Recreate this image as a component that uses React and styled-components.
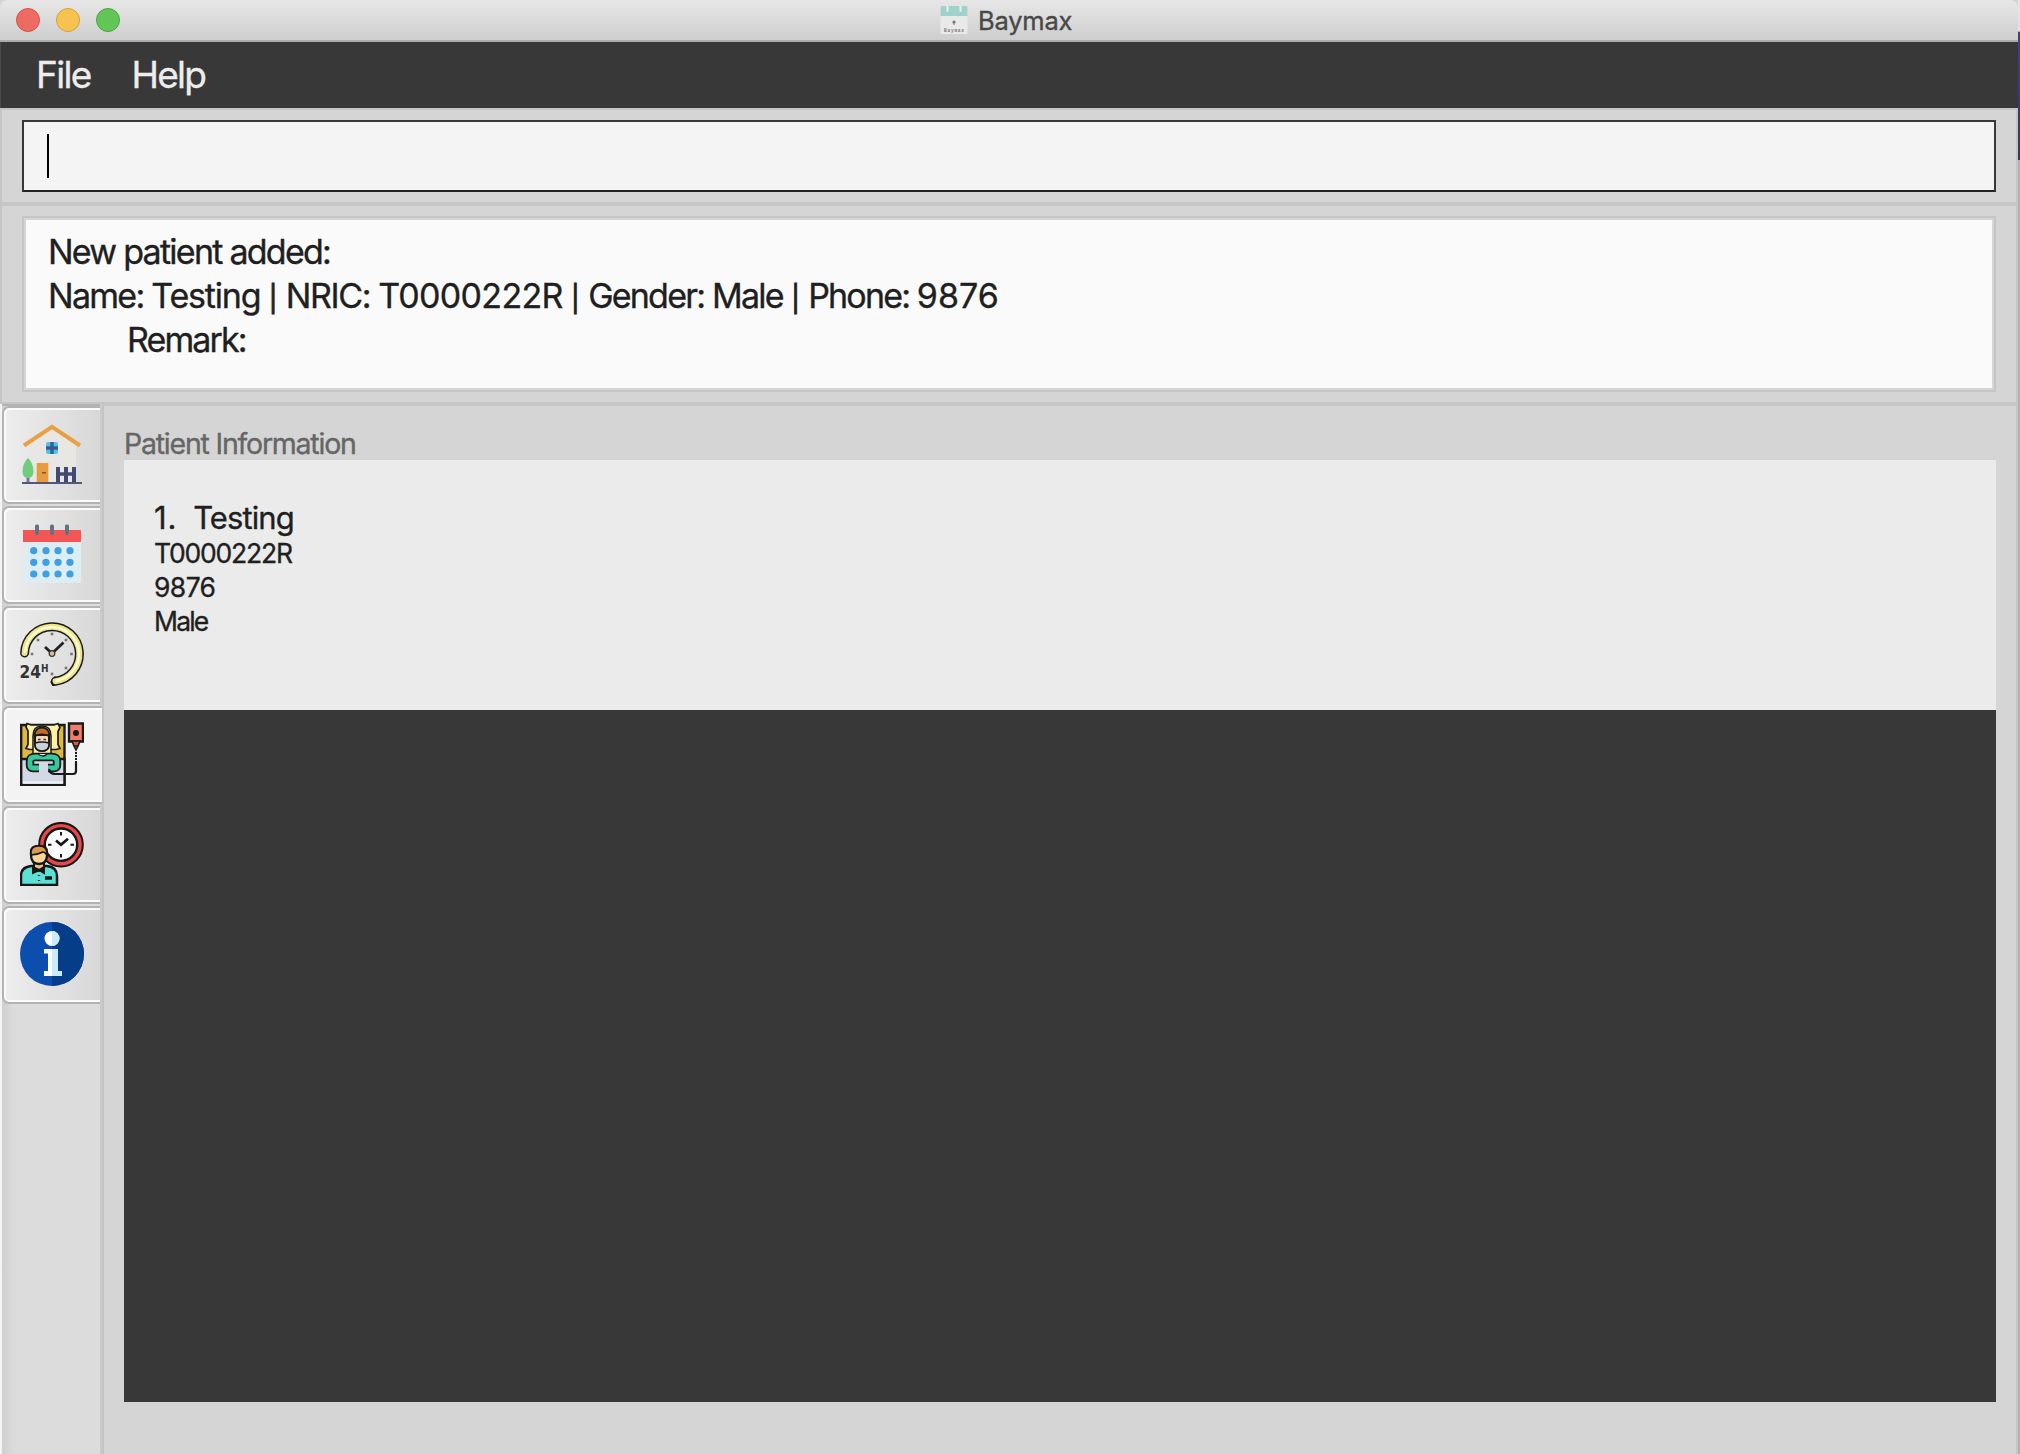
import React from "react";
import styled, { createGlobalStyle } from "styled-components";

const GlobalStyle = createGlobalStyle`
  * { box-sizing: border-box; }
  body { margin: 0; background: #d5d5d5; font-family: Inter, "Liberation Sans", sans-serif; }
`;

const Window = styled.div`
  width: 2020px;
  height: 1454px;
  display: flex;
  flex-direction: row;
  overflow: hidden;
  background: #d5d5d5;
`;

const Frame = styled.div`
  width: 2018px;
  display: flex;
  flex-direction: column;
`;

const Desktop = styled.div`
  width: 2px;
  height: 1454px;
  background: linear-gradient(to bottom, #e4e4e4 0 31px, #a9a9a9 31px 32px, #33438f 32px, #2c3978 160px, #b2b2b2 160px);
`;

const TitleBar = styled.header`
  height: 42px;
  display: flex;
  align-items: flex-start;
  border-bottom: 2px solid #adadad;
  border-radius: 8px 8px 0 0;
  background: linear-gradient(#e7e7e7, #cecece);
`;

const Lights = styled.div`
  display: flex;
  gap: 16px;
  padding: 8px 0 0 16px;
  width: 940px;
`;

const Light = styled.span`
  width: 24px;
  height: 24px;
  border-radius: 50%;
  background: ${(p) => p.$fill};
  border: 1px solid ${(p) => p.$edge};
`;

const Label = styled.div`
  font-size: ${(p) => p.$size}px;
  line-height: ${(p) => p.$line}px;
  letter-spacing: ${(p) => p.$track || 0}px;
  color: ${(p) => p.$color || "#1f1f1f"};
  -webkit-text-stroke: 0.35px currentColor;
  white-space: pre;
`;

const Run = styled.span`
  letter-spacing: ${(p) => p.$track}px;
`;

const Bar = styled.span`
  display: inline-block;
  width: 25.5px;
  font-size: 26px;
  line-height: 30px;
  text-align: center;
  -webkit-text-stroke-width: 0.9px;
`;

const AppIcon = styled.svg`
  width: 28px;
  height: 29px;
  margin-top: 5px;
`;

const WindowTitle = styled(Label)`
  margin: 5px 0 0 10px;
`;

const MenuBar = styled.nav`
  height: 66px;
  display: flex;
  gap: 41px;
  padding: 10px 0 0 35px;
  background: #383838;
  border-left: 1px solid #4a4a4a;
`;

const Pane = styled.section`
  height: ${(p) => p.$height}px;
  padding: 10px 20px;
  border: 2px solid #c5c5c5;
  display: flex;
`;

const CommandField = styled.div`
  flex: 1;
  height: 72px;
  border: 2px solid #383838;
  border-bottom-color: #222;
  background: #f4f4f4;
  padding: 12px 23px;
`;

const Caret = styled.div`
  width: 2px;
  height: 44px;
  background: #000;
`;

const ResultBox = styled.div`
  flex: 1;
  height: 176px;
  border: 2px solid #c5c5c5;
  outline: 2px solid #d5d5d5;
  outline-offset: -4px;
  background: #fafafa;
  padding: 12px 24px;
`;

const Indented = styled.div`
  padding-left: 79px;
`;

const Main = styled.main`
  flex: 1;
  display: flex;
`;

const Sidebar = styled.aside`
  width: 102px;
  padding-top: 2px;
  border-left: 2px solid #f4f4f4;
  background:
    linear-gradient(to right, transparent 98px, #cbcbcb 98px),
    linear-gradient(#b3b3b3 0 2px, transparent 2px),
    linear-gradient(to right, #cfcfcf, #dcdcdc 12px);
  display: flex;
  flex-direction: column;
  gap: 2px;
`;

const Tab = styled.div`
  width: ${(p) => (p.$active ? 100 : 98)}px;
  height: 98px;
  border: 2px solid #b3b3b3;
  border-right: 0;
  border-radius: 7px 0 0 7px;
  background: ${(p) => (p.$active ? "#f3f3f3" : "linear-gradient(to right, #ededed, #d8d8d8)")};
  box-shadow: inset 2px 2px 0 #fbfbfb, inset 0 -2px 0 #fbfbfb;
  padding: 14px 0 0 16px;

  svg { display: block; width: 64px; height: 64px; }
`;

const Content = styled.section`
  flex: 1;
  border-left: 2px solid #c4c4c4;
  border-top: 2px solid #c5c5c5;
  border-right: 2px solid #c5c5c5;
  padding: 21px 20px 0;
`;

const SectionTitle = styled(Label)`
  height: 33px;
`;

const PatientList = styled.div`
  height: 942px;
  background: #383838;
`;

const PatientCell = styled.article`
  height: 250px;
  background: #ebebeb;
  padding: 38px 30px;
`;

const NameRow = styled.div`
  display: flex;
  height: 38px;
  gap: 16px;
`;

const HomeIcon = () => (
  <svg viewBox="0 0 64 64">
    <path d="M8 22 32 6l24 16v38H8z" fill="#e8e7e3" />
    <path d="M4 23.5 32 4.8l28 18.7" fill="none" stroke="#e9a045" strokeWidth="4" />
    <rect x="26" y="20" width="12" height="12" rx="2" fill="#48c4f1" />
    <path d="M32 20v12M26 26h12" stroke="#3b5d8d" strokeWidth="3.400" />
    <path d="M8 50v11" stroke="#77779a" strokeWidth="3" />
    <path d="M8 36c3 3 5.500 8 5.500 13S11 56 8 56s-5.500-2-5.500-7S5 39 8 36z" fill="#72cc7d" />
    <rect x="16.700" y="41" width="11.600" height="20" fill="#e99b40" />
    <path d="M22 50.800h4" stroke="#7a5a35" strokeWidth="1.500" />
    <path d="M38 45v16M46 45v16M54 45v16" stroke="#434872" strokeWidth="4" />
    <path d="M38 52h16" stroke="#434872" strokeWidth="3.500" />
    <path d="M2 61h60" stroke="#53577b" strokeWidth="2" />
  </svg>
);

const CalendarIcon = () => (
  <svg viewBox="0 0 64 64">
    <rect x="3.500" y="20" width="57.500" height="41" fill="#dcedf4" />
    <rect x="3" y="8" width="58" height="12" fill="#f45656" />
    {[17, 32, 47].map((x) => (
      <rect key={x} x={x - 2} y="2.500" width="4" height="10.500" rx="1.500" fill="#65727d" />
    ))}
    {[28.7, 40.3, 52].map((y) =>
      [13.7, 26, 38, 50].map((x) => <circle key={`${x}-${y}`} cx={x} cy={y} r="3.600" fill="#3f9fe3" />)
    )}
  </svg>
);

const ClockIcon = () => (
  <svg viewBox="0 0 64 64" fill="none">
    <path d="M36 55l-4 5 2 4" stroke="#1c1c1c" strokeWidth="3" />
    <path d="M4.600 31A27.400 27.400 0 1 1 35.500 59.200" stroke="#1c1c1c" strokeWidth="9" strokeLinecap="round" />
    <path d="M4.600 31A27.400 27.400 0 1 1 35.500 59.200" stroke="#ece68c" strokeWidth="6" strokeLinecap="round" />
    <path d="M5 31A27 27 0 1 1 35.500 58.800" stroke="#fdfbd6" strokeWidth="2.200" />
    {[[32, 12], [18, 18], [12, 32], [46, 18], [51.5, 32], [46, 46], [32, 52]].map(([x, y]) => (
      <rect key={`${x}-${y}`} x={x - 1.3} y={y - 1.3} width="2.600" height="2.600" fill="#777" />
    ))}
    <path d="M25 25l6 5.500M33 30.500L43.500 20.500" stroke="#222" strokeWidth="2.800" />
    <circle cx="32" cy="31.500" r="2.800" fill="#e3bd98" stroke="#333" strokeWidth="1.200" />
    <text x="-0.500" y="56" fontFamily="DejaVu Sans, sans-serif" fontWeight="700" fontSize="18" textLength="21.500" lengthAdjust="spacingAndGlyphs" fill="#333">24</text>
    <text x="21" y="50" fontFamily="DejaVu Sans, sans-serif" fontWeight="700" fontSize="10" textLength="7.500" lengthAdjust="spacingAndGlyphs" fill="#333">H</text>
  </svg>
);

const PatientIcon = () => (
  <svg viewBox="0 0 64 64" stroke="#1a1a1a" strokeWidth="2" fill="none">
    <path d="M1.200 3h43.300v60H1.200z" fill="#dfb840" strokeWidth="2.400" />
    <path d="M1.200 37h43.300v26H1.200z" fill="#d3d9e4" strokeWidth="2.400" />
    <path d="M3 60.500h40" stroke="#eef1f6" strokeWidth="2.400" />
    <path d="M7 1.500l4 1.500h23l4-1.500 2 4-2 4v13l2 4-4 1H10l-4-1 2-4V9L6 5z" fill="#fff0a8" strokeWidth="1.700" />
    <path d="M13 33V14c0-6 3-10 9-10s9 4 9 10v19" fill="#fff0a8" strokeWidth="1.500" />
    <path d="M15 13h14v9c0 4-3 7-7 7s-7-3-7-7z" fill="#f6d4b8" strokeWidth="2" />
    <path d="M14.500 14c0-5 3-8.500 7.500-8.500s7.500 3.500 7.500 8.500c-4-2-11-2-15 0z" fill="#c5662d" strokeWidth="2" />
    <path d="M15 21q7-2 14 0v2c0 4-3 6-7 6s-7-2-7-6z" fill="#cad1dc" strokeWidth="1.700" />
    <path d="M18 17.500h2.500M23.500 17.500H26" stroke="#333" strokeWidth="1.700" />
    <path d="M19 35h-4q-5 0-5 4v4q0 3 3 3h6M25 35h7q5 0 5 4v4q0 3-3 3h-6M18 35h10" strokeWidth="8.500" strokeLinejoin="round" />
    <path d="M19 35h-4q-5 0-5 4v4q0 3 3 3h6M25 35h7q5 0 5 4v4q0 3-3 3h-6M18 35h10" stroke="#37c99e" strokeWidth="4.800" strokeLinejoin="round" />
    <path d="M18 32q5.500 4 9 0" fill="#e7edf1" strokeWidth="1.300" />
    <path d="M49 1.500h14v18H49z" fill="#f17c6b" strokeWidth="2.400" />
    <path d="M52 19h8l-2 5h-4zM54 24h4l-2 4z" fill="#d45749" strokeWidth="1.600" />
    <circle cx="56" cy="11" r="2" fill="#1a1a1a" />
    <path d="M56 30v10" strokeDasharray="2 1" />
    <path d="M56 40v9q0 3-3 3H35q-5 0-6-5" strokeWidth="2.200" />
  </svg>
);

const AppointmentIcon = () => (
  <svg viewBox="0 0 64 64" stroke="#161616" strokeWidth="2">
    <circle cx="41" cy="22.700" r="21.800" fill="#e5474a" />
    <circle cx="41" cy="22.700" r="16.200" fill="#fff" strokeWidth="2.400" />
    <path d="M41 10v3.500M41 32v3.500M28 22.700h3.500M50.500 22.700H54" />
    <path d="M36 18.500l5 4.200 7-6" fill="none" strokeWidth="2.800" />
    <path d="M1 63V54q0-9 10-10h16q10 1 10 10v9z" fill="#5ce0d6" strokeWidth="2.500" />
    <path d="M14 40h10v7l-5 2-5-2z" fill="#efbf82" />
    <path d="M11 30q0-6 8-6t8 6v3q0 9-8 9t-8-9z" fill="#fbd596" strokeWidth="2.300" />
    <path d="M11 33v-4q1-5 8-5 7 0 8 6v3q-2-3-4-3-6 3-12 3z" fill="#d99b46" strokeWidth="1.700" />
    <path d="M13 45v6l6-3 5 3v-6l-5 3z" fill="#161616" />
    <path d="M19 53v1M19 58v1" strokeWidth="2.300" />
    <path d="M25 56h7" strokeWidth="3.500" />
  </svg>
);

const InfoIcon = () => (
  <svg viewBox="0 0 64 64">
    <circle cx="32" cy="32" r="32" fill="#0b4eae" />
    <path d="M32 0a32 32 0 0 1 0 64z" fill="#063d88" />
    <circle cx="32" cy="16.500" r="7.500" fill="#fff" />
    <path d="M32 9a7.500 7.500 0 0 1 0 15z" fill="#c9ecff" />
    <path d="M24 27h14v22h4v5H24v-5h4V31.500h-4z" fill="#fff" />
    <path d="M32 27h6v22h4v5H32z" fill="#c9ecff" />
  </svg>
);

const CalendarAppIcon = () => (
  <AppIcon viewBox="0 0 28 29">
    <rect x="0.500" y="2" width="27" height="27" rx="1.500" fill="#e9e9e9" />
    <path d="M0.500 11V2.500Q.500 1 2 1h24q1.500 0 1.500 1.500V11z" fill="#9fd3ca" />
    <path d="M7.500 1v5M20.500 1v5" stroke="#eee" strokeWidth="2" strokeLinecap="round" />
    <circle cx="14" cy="17" r="1.600" fill="#777" />
    <path d="M14 18v2" stroke="#777" />
    <text x="4" y="26.500" fontSize="4.500" fontWeight="700" fontFamily="Liberation Mono, monospace" textLength="20" fill="#777">Baymax</text>
  </AppIcon>
);

const tabs = [HomeIcon, CalendarIcon, ClockIcon, PatientIcon, AppointmentIcon, InfoIcon];
const ACTIVE_TAB = 3;

const resultFields = [
  { name: "Name: ", value: "Testing", nameTrack: -1.72, valueTrack: -1.2 },
  { name: "NRIC: ", value: "T0000222R", nameTrack: -1.4, valueTrack: -0.7 },
  { name: "Gender: ", value: "Male", nameTrack: -1.77, valueTrack: -1.8 },
  { name: "Phone: ", value: "9876", nameTrack: -1.84, valueTrack: 0 },
];

export default function App() {
  return (
    <Window>
      <GlobalStyle />
      <Frame>
        <TitleBar>
          <Lights>
            <Light $fill="#ed6b60" $edge="#d55549" />
            <Light $fill="#f6c350" $edge="#d8a13c" />
            <Light $fill="#62c656" $edge="#4ba73f" />
          </Lights>
          <CalendarAppIcon />
          <WindowTitle $size={25.5} $line={32} $track={-0.2} $color="#484848">Baymax</WindowTitle>
        </TitleBar>
        <MenuBar>
          <Label $size={37} $line={46} $track={-1.7} $color="#ededed">File</Label>
          <Label $size={37} $line={46} $track={-1.8} $color="#ededed">Help</Label>
        </MenuBar>
        <Pane $height={96}>
          <CommandField><Caret /></CommandField>
        </Pane>
        <Pane $height={200}>
          <ResultBox>
            <Label $size={34} $line={44} $track={-1.75}>New patient added:</Label>
            <Label $size={34} $line={44}>
              {resultFields.map((field, i) => (
                <React.Fragment key={field.name}>
                  {i > 0 && <Bar>|</Bar>}
                  <Run $track={field.nameTrack}>{field.name}</Run>
                  <Run $track={field.valueTrack}>{field.value}</Run>
                </React.Fragment>
              ))}
            </Label>
            <Indented>
              <Label $size={34} $line={44} $track={-1.9}>Remark:</Label>
            </Indented>
          </ResultBox>
        </Pane>
        <Main>
          <Sidebar>
            {tabs.map((Icon, i) => (
              <Tab key={i} $active={i === ACTIVE_TAB}><Icon /></Tab>
            ))}
          </Sidebar>
          <Content>
            <SectionTitle $size={28.5} $line={34} $track={-1.22} $color="#666">Patient Information</SectionTitle>
            <PatientList>
              <PatientCell>
                <NameRow>
                  <Label $size={31} $line={40} $track={0.8}>1.</Label>
                  <Label $size={31} $line={40} $track={-0.9}>Testing</Label>
                </NameRow>
                <Label $size={26.5} $line={34} $track={-1.2}>T0000222R</Label>
                <Label $size={26.5} $line={34} $track={-0.6}>9876</Label>
                <Label $size={26.5} $line={34} $track={-1.8}>Male</Label>
              </PatientCell>
            </PatientList>
          </Content>
        </Main>
      </Frame>
      <Desktop />
    </Window>
  );
}
